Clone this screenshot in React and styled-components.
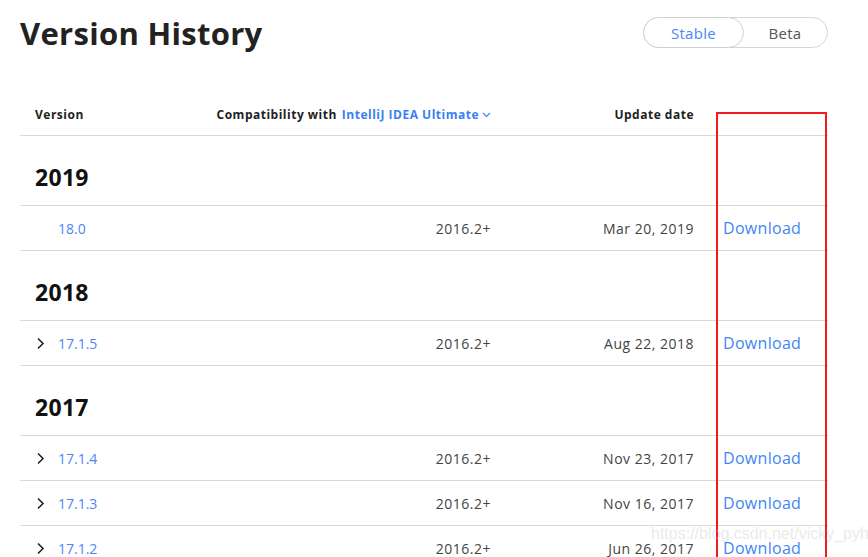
import React from "react";
import styled, { createGlobalStyle } from "styled-components";

const GlobalStyle = createGlobalStyle`
  body {
    margin: 0;
    background: #fff;
    font-family: "Open Sans", "Liberation Sans", sans-serif;
    color: #333;
  }
  * {
    box-sizing: border-box;
  }
`;

const Page = styled.div`
  position: relative;
  width: 868px;
  height: 557px;
  overflow: hidden;
  padding: 0 40px 0 20px;
`;

const TopBar = styled.div`
  display: flex;
  align-items: center;
  justify-content: space-between;
  height: 66px;
`;

const Title = styled.h1`
  margin: 0;
  font-size: 31px;
  font-weight: 700;
  color: #222;
  letter-spacing: 0.3px;
`;

const Toggle = styled.div`
  display: flex;
  height: 31px;
  border: 1px solid #d6d6d6;
  border-radius: 16px;
  margin-top: -1px;
`;

const ToggleItem = styled.div`
  display: flex;
  align-items: center;
  justify-content: center;
  width: ${p => p.w}px;
  margin: -1px;
  border-radius: 16px;
  font-size: 15px;
  letter-spacing: 0.3px;
  color: ${p => (p.active ? "#4a86f5" : "#555")};
  border: 1px solid ${p => (p.active ? "#d0d0d0" : "transparent")};
  background: ${p => (p.active ? "#fff" : "transparent")};
`;

const Row = styled.div`
  display: grid;
  grid-template-columns: 280px 191px 203px 134px;
  align-items: center;
  height: ${p => p.h}px;
  border-bottom: 1px solid #d9d9d9;
`;

const HeadCell = styled.div`
  display: flex;
  justify-content: ${p => (p.right ? "flex-end" : "flex-start")};
  font-size: 12px;
  font-weight: 700;
  letter-spacing: 0.5px;
  color: #222;
  padding-left: ${p => (p.first ? "15px" : "0")};
  padding-top: 28px;
  white-space: nowrap;
`;

const Product = styled.span`
  color: #3b7ff2;
  display: inline-flex;
  align-items: center;
  gap: 3px;
  margin-left: 5px;
`;

const Year = styled.div`
  grid-column: 1 / -1;
  font-size: 23px;
  font-weight: 700;
  color: #111;
  padding-left: 15px;
  padding-top: 12px;
  letter-spacing: 0.3px;
`;

const VersionCell = styled.div`
  display: flex;
  align-items: center;
  padding-left: 16px;
`;

const Chevron = styled.span`
  display: inline-flex;
  width: 22px;
`;

const VersionLink = styled.a`
  color: #4a86f5;
  font-size: 14px;
  text-decoration: none;
`;

const Cell = styled.div`
  font-size: 14px;
  letter-spacing: 0.5px;
  color: #444;
  text-align: right;
`;

const DownloadCell = styled.div`
  padding-left: 29px;
`;

const DownloadLink = styled.a`
  color: #3f86f5;
  font-size: 16px;
  letter-spacing: 0.3px;
  text-decoration: none;
`;

const Marker = styled.div`
  position: absolute;
  left: 716px;
  top: 112px;
  width: 111px;
  height: 460px;
  border: 2px solid #f01c1c;
  pointer-events: none;
`;

const Watermark = styled.div`
  position: absolute;
  left: 651px;
  top: 525px;
  font-family: "Liberation Sans", sans-serif;
  font-size: 16px;
  color: rgba(200, 200, 200, 0.4);
  white-space: nowrap;
  pointer-events: none;
`;

const data = [
  { year: "2019", items: [{ v: "18.0", date: "Mar 20, 2019", expand: false }] },
  { year: "2018", items: [{ v: "17.1.5", date: "Aug 22, 2018", expand: true }] },
  {
    year: "2017",
    items: [
      { v: "17.1.4", date: "Nov 23, 2017", expand: true },
      { v: "17.1.3", date: "Nov 16, 2017", expand: true },
      { v: "17.1.2", date: "Jun 26, 2017", expand: true }
    ]
  }
];

const ChevronRight = () => (
  <svg width="9" height="13" viewBox="0 0 9 13" fill="none">
    <path d="M2 1.5l5 5-5 5" stroke="#222" strokeWidth="1.6" />
  </svg>
);

const ChevronDown = () => (
  <svg width="9" height="6" viewBox="0 0 9 6" fill="none">
    <path d="M1 1l3.5 3.5L8 1" stroke="#3b7ff2" strokeWidth="1.1" />
  </svg>
);

export default function App() {
  return (
    <Page>
      <GlobalStyle />
      <TopBar>
        <Title>Version History</Title>
        <Toggle>
          <ToggleItem active w={101}>Stable</ToggleItem>
          <ToggleItem w={86}>Beta</ToggleItem>
        </Toggle>
      </TopBar>

      <Row h={70}>
        <HeadCell first>Version</HeadCell>
        <HeadCell right>
          Compatibility with
          <Product>
            IntelliJ IDEA Ultimate <ChevronDown />
          </Product>
        </HeadCell>
        <HeadCell right>Update date</HeadCell>
        <div />
      </Row>

      {data.map(group => (
        <React.Fragment key={group.year}>
          <Row h={70}>
            <Year>{group.year}</Year>
          </Row>
          {group.items.map(item => (
            <Row h={45} key={item.v}>
              <VersionCell>
                <Chevron>{item.expand && <ChevronRight />}</Chevron>
                <VersionLink>{item.v}</VersionLink>
              </VersionCell>
              <Cell>2016.2+</Cell>
              <Cell>{item.date}</Cell>
              <DownloadCell>
                <DownloadLink>Download</DownloadLink>
              </DownloadCell>
            </Row>
          ))}
        </React.Fragment>
      ))}

      <Marker />
      <Watermark>https://blog.csdn.net/vicky_pyh</Watermark>
    </Page>
  );
}
